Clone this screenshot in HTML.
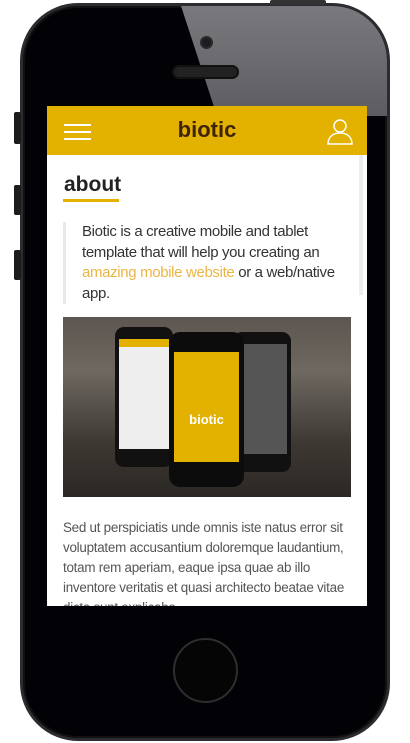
<!DOCTYPE html>
<html><head><style>
*{margin:0;padding:0;box-sizing:border-box}
body{width:410px;height:743px;background:#fff;position:relative;overflow:hidden;font-family:"Liberation Sans",sans-serif}
.phone{position:absolute;left:20px;top:3px;width:370px;height:738px;border-radius:58px;background:#020206;border:3px solid #2c2c30;overflow:hidden;box-shadow:inset 0 0 0 2px #111}
.gloss{position:absolute;left:158px;top:0;width:260px;height:110px;background:linear-gradient(180deg,#7a797d,#5d5c60);clip-path:polygon(0 0,100% 0,100% 100%,36px 100%)}
.btn{position:absolute;left:14px;width:7px;background:#1c1c1c;border-radius:2px}
.screen{position:absolute;left:47px;top:106px;width:320px;height:500px;background:#fff;overflow:hidden}
.hdr{height:49px;background:#e3b100;position:relative}
.ham{position:absolute;left:17px;width:27px;height:2px;background:#fff}
.logo{position:absolute;left:0;right:0;top:11px;text-align:center;font-weight:bold;font-size:22px;color:#3f2406}
h2{position:absolute;left:17px;top:67px;font-size:21px;font-weight:bold;color:#222}
.ul{position:absolute;left:16px;top:93px;width:56px;height:3px;background:#e3b100}
.quote{position:absolute;left:16px;top:116px;width:300px;border-left:3px solid #e8e8e8;padding-left:16px;font-size:15px;letter-spacing:-0.35px;line-height:20.5px;color:#333}
.quote span{color:#ebb544}
.img{position:absolute;left:16px;top:211px;width:288px;height:180px;background:linear-gradient(180deg,#5d5650,#6e6861 30%,#3d3832 70%,#2b2724);overflow:hidden}
.txt{position:absolute;left:16px;top:412px;width:296px;font-size:13.4px;letter-spacing:-0.25px;line-height:20px;color:#555}
.sb{position:absolute;left:312px;top:49px;width:4px;height:140px;background:#eee}
</style></head><body>
<div class="phone"><div class="gloss"></div></div>
<div style="position:absolute;left:270px;top:0;width:56px;height:5px;background:#333;border-radius:2px"></div>
<div class="btn" style="top:112px;height:32px"></div>
<div class="btn" style="top:185px;height:30px"></div>
<div class="btn" style="top:250px;height:30px"></div>
<div style="position:absolute;left:200px;top:36px;width:13px;height:13px;border-radius:50%;background:#1b1b22;border:2px solid #2a2a2a"></div>
<div style="position:absolute;left:172px;top:65px;width:67px;height:14px;border-radius:7px;background:#222;border:2px solid #111"></div>
<div style="position:absolute;left:173px;top:638px;width:65px;height:65px;border-radius:50%;background:#050505;border:2px solid #2e2e2e"></div>
<div class="screen">
 <div class="hdr">
  <div class="ham" style="top:18px"></div><div class="ham" style="top:25px"></div><div class="ham" style="top:32px"></div>
  <div class="logo">biotic</div>
  <svg style="position:absolute;left:279px;top:11px" width="28" height="28" viewBox="0 0 28 28" fill="none" stroke="#fff" stroke-width="1.5"><circle cx="14" cy="9" r="6"/><path d="M2 27c0-7 5-11 12-11s12 4 12 11z"/></svg>
 </div>
 <div class="sb"></div>
 <h2>about</h2><div class="ul"></div>
 <div class="quote">Biotic is a creative mobile and tablet template that will help you creating an <span>amazing mobile website</span> or a web/native app.</div>
 <div class="img">
  <div style="position:absolute;left:52px;top:10px;width:58px;height:140px;border-radius:9px;background:#111"><div style="margin:12px 4px;height:110px;background:#eee"><div style="height:8px;background:#e3b100"></div></div></div>
  <div style="position:absolute;left:170px;top:15px;width:58px;height:140px;border-radius:9px;background:#111"><div style="margin:12px 4px;height:110px;background:#555"></div></div>
  <div style="position:absolute;left:106px;top:15px;width:75px;height:155px;border-radius:11px;background:#0c0c0c"><div style="margin:20px 5px;height:110px;background:#e3b100;color:#fff;font-weight:bold;font-size:13px;text-align:center;padding-top:60px">biotic</div></div>
 </div>
 <div class="txt">Sed ut perspiciatis unde omnis iste natus error sit voluptatem accusantium doloremque laudantium, totam rem aperiam, eaque ipsa quae ab illo inventore veritatis et quasi architecto beatae vitae dicta sunt explicabo.</div>
</div>
</body></html>
